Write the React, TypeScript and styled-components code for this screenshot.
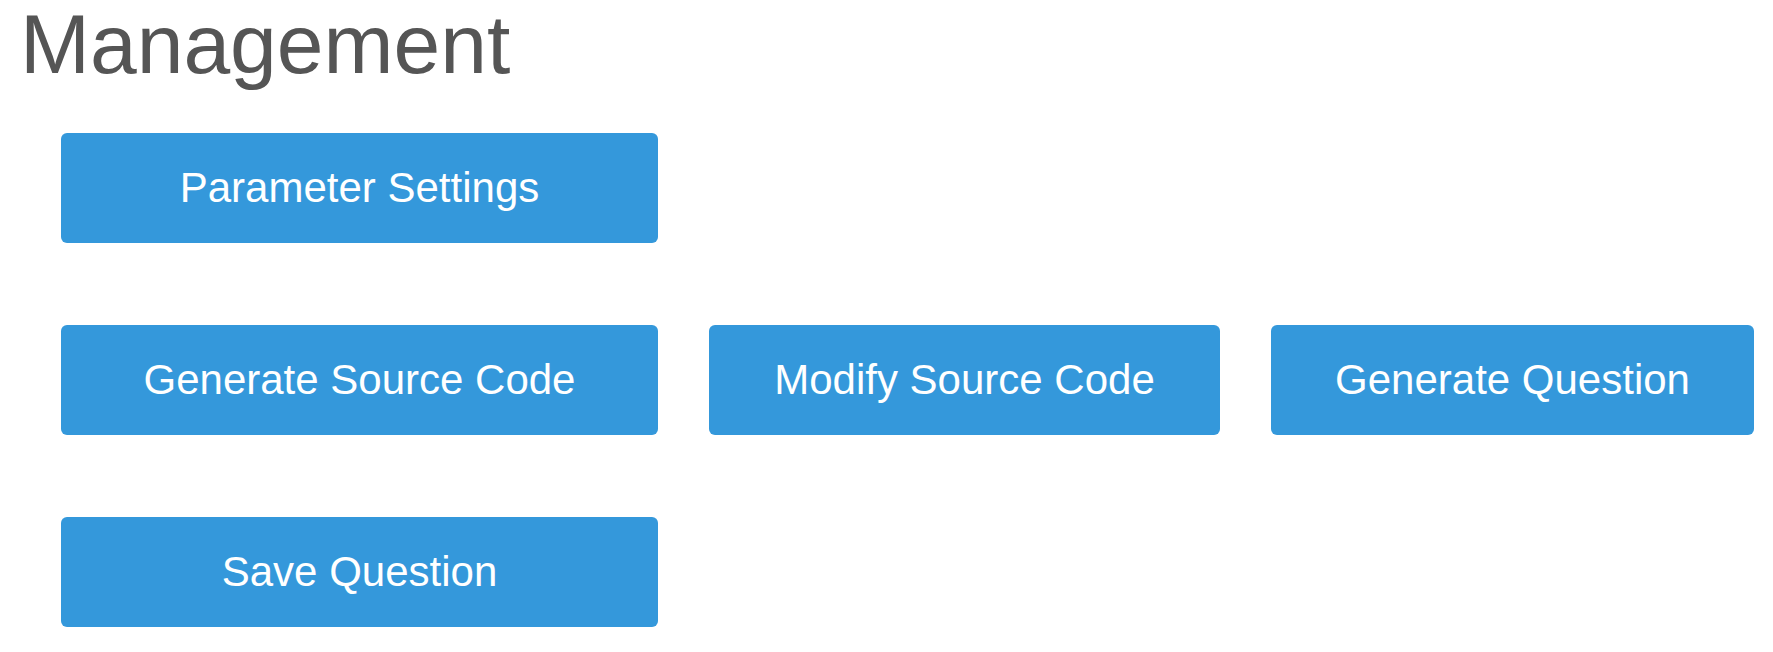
import * as React from "react";
import styled, { createGlobalStyle } from "styled-components";

const GlobalStyle = createGlobalStyle`
  html, body {
    margin: 0;
    padding: 0;
    background: #ffffff;
    font-family: "Liberation Sans", Arial, sans-serif;
  }
`;

const Page = styled.div`
  padding: 0 0 0 20px;
  box-sizing: border-box;
  width: 1773px;
  height: 652px;
  overflow: hidden;
`;

const Title = styled.h1`
  margin: 0;
  padding: 2px 0 10px;
  font-size: 84px;
  line-height: 84px;
  font-weight: normal;
  color: #555555;
`;

const Actions = styled.div`
  display: flex;
  flex-direction: column;
  gap: 82px;
  margin: 37px 0 0 41px;
`;

const Row = styled.div`
  display: flex;
  gap: 51px;
`;

const ActionButton = styled.button<{ $width: number }>`
  display: flex;
  align-items: center;
  justify-content: center;
  width: ${(p) => p.$width}px;
  height: 110px;
  padding: 0;
  border: none;
  border-radius: 6px;
  background-color: #3498db;
  color: #ffffff;
  font-family: "Liberation Sans", Arial, sans-serif;
  font-size: 42px;
  line-height: 1;
  cursor: pointer;
`;

export default function App() {
  return (
    <Page>
      <GlobalStyle />
      <Title>Management</Title>
      <Actions>
        <Row>
          <ActionButton $width={597}>Parameter Settings</ActionButton>
        </Row>
        <Row>
          <ActionButton $width={597}>Generate Source Code</ActionButton>
          <ActionButton $width={511}>Modify Source Code</ActionButton>
          <ActionButton $width={483}>Generate Question</ActionButton>
        </Row>
        <Row>
          <ActionButton $width={597}>Save Question</ActionButton>
        </Row>
      </Actions>
    </Page>
  );
}
